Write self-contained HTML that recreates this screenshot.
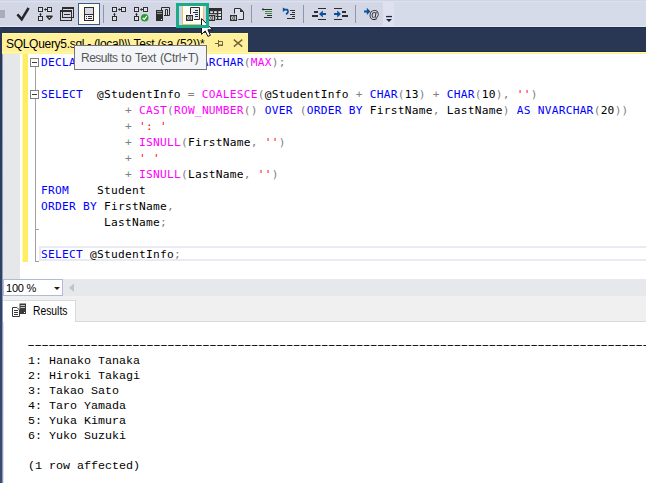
<!DOCTYPE html>
<html>
<head>
<meta charset="utf-8">
<title>SQLQuery5.sql</title>
<style>
html,body{margin:0;padding:0;}
body{width:646px;height:483px;overflow:hidden;position:relative;background:#fff;font-family:"Liberation Sans",sans-serif;}
.abs{position:absolute;}
#topstrip{left:0;top:0;width:646px;height:1px;background:#cfd5e6;border-bottom:1px solid #dde1ed;}
#toolbar{left:0;top:2px;width:646px;height:25px;background:#d6dbe9;}
#tbdark{left:0;top:3px;width:383px;height:22px;background:#d3d7e5;}
#tblight{left:383px;top:2px;width:11px;height:24px;background:#dfe2ee;}
#navy{left:0;top:27px;width:646px;height:23px;background:#293755;border-top:1px solid #1e2c4c;border-bottom:1px solid #1c2b50;}
#tbhl{left:0;top:26px;width:646px;height:1px;background:#e5e9f5;}
#leftedge{left:0;top:27px;width:2px;height:456px;background:linear-gradient(to bottom,#283756 0px,#2a3a59 75px,#35496b 375px,#394d70 456px);}
#leftedge3{left:2px;top:54px;width:1px;height:429px;background:#8e9bc0;}
#tab{left:2px;top:33px;width:246px;height:20px;background:#fff09b;border-top:1px solid #fffa9c;}
#tabline{left:2px;top:52px;width:644px;height:1px;background:#fffb99;border-bottom:1px solid #fff09b;}
#tabtext{left:6px;top:36px;font-size:12px;line-height:16px;color:#000;white-space:pre;letter-spacing:-0.3px;}
#editor{left:3px;top:54px;width:643px;height:225px;background:#fff;}
#margin{left:3px;top:54px;width:17px;height:225px;background:#e6e7e8;}
#chg{left:23px;top:54px;width:5px;height:208px;background:#ffee62;border-left:1px solid #fff6b8;margin-left:-1px;}
.ob{position:absolute;left:30px;width:7px;height:7px;border:1px solid #808080;background:#fff;}
.ob i{position:absolute;left:1px;top:3px;width:5px;height:1px;background:#3c3c3c;}
.vl{position:absolute;left:35px;width:1px;background:#a0a0a0;}
.tick{position:absolute;left:35px;width:4px;height:1px;background:#a0a0a0;}
#curline{left:39px;top:246px;width:620px;height:11px;border:2px solid #eaeaf3;}
#code{left:41px;top:55px;font-family:"DejaVu Sans Mono","Liberation Mono",monospace;font-size:11.2px;letter-spacing:0.257px;line-height:16px;color:#000;}
#code div{height:16px;white-space:pre;}
.k{color:#0000ff}.f{color:#ff00ff}.s{color:#ff0000}.g{color:#808080}
#zoombar{left:3px;top:279px;width:643px;height:17px;background:#e7e8ec;}
#zoomcombo{left:3px;top:279px;width:58px;height:15px;border:1px solid #b0bbd9;background:#fff;}
#zoomtxt{left:6px;top:281px;font-size:11px;line-height:14px;color:#000;white-space:pre;letter-spacing:-0.2px;}
#tabstrip{left:3px;top:296px;width:643px;height:25px;background:#f0f0f0;}
#tabstripline{left:3px;top:321px;width:643px;height:1px;background:#d9d9d9;}
#restab{left:3px;top:300px;width:72px;height:22px;background:#fff;border-top:1px solid #dadada;border-right:1px solid #dadada;}
#restxt{left:33px;top:304px;font-size:12px;line-height:14px;color:#000;transform:scaleX(0.86);transform-origin:0 0;}
#results{left:3px;top:322px;width:642px;height:161px;background:#fff;border-left:1px solid #e0e0e0;}
#out{left:28px;top:339px;font-family:"Liberation Mono",monospace;font-size:11.67px;line-height:15px;color:#000;}
#out div{height:15px;white-space:pre;}
#out div.dash{letter-spacing:-3.002px;position:relative;top:-1px;left:-3px;transform:scaleX(1.75);transform-origin:0 0;width:400px;overflow:hidden;}
#tooltip{left:74px;top:45px;width:131px;height:23px;border:1px solid #767676;background:#f4f5f9;}
#tooltip span{position:absolute;left:6px;top:4px;letter-spacing:-0.15px;font-size:12px;line-height:16px;color:#575757;white-space:pre;}
</style>
</head>
<body>
<div class="abs" id="topstrip"></div>
<div class="abs" id="toolbar"></div>
<div class="abs" id="tbdark"></div>
<div class="abs" id="tblight"></div>
<div class="abs" id="tbhl"></div>
<div class="abs" id="navy"></div>
<svg class="abs" id="tbicons" style="left:0;top:0" width="646" height="28" viewBox="0 0 646 28"><rect x="0" y="10" width="5" height="8" fill="#a9adba"/><path d="M17.4 14.4L21.7 19.4L28.6 8" fill="none" stroke="#262626" stroke-width="2.5"/><g transform="translate(38,0)"><rect x="0.5" y="7.5" width="4" height="4" fill="#eceef5" stroke="#2d2d2d"/><path d="M2.5 8v3M1 9.5h3" stroke="#c9ccd8" stroke-width="0.6"/><rect x="9.5" y="7.5" width="4" height="4" fill="#eceef5" stroke="#2d2d2d"/><path d="M11.5 8v3M10 9.5h3" stroke="#c9ccd8" stroke-width="0.6"/><rect x="0.5" y="16.5" width="4" height="4" fill="#eceef5" stroke="#2d2d2d"/><path d="M2.5 17v3M1 18.5h3" stroke="#c9ccd8" stroke-width="0.6"/><path d="M7 9.5H9" stroke="#2d2d2d"/><path d="M5.9 9.5l2-1.4v2.8z" fill="#2d2d2d"/><path d="M2.5 14V16" stroke="#2d2d2d"/><path d="M2.5 12.7l-1.4 2h2.8z" fill="#2d2d2d"/><path d="M8.7 16.3h5.4l-2.7 3z" fill="#e4e6ef" stroke="#2d2d2d" stroke-width="1.4" stroke-linejoin="round"/></g><rect x="62.5" y="7.5" width="11" height="10" fill="none" stroke="#2d2d2d"/><rect x="62" y="7" width="12" height="2" fill="#2d2d2d"/><rect x="60.5" y="10.5" width="11" height="10" fill="none" stroke="#2d2d2d"/><rect x="60" y="10" width="12" height="2" fill="#2d2d2d"/><rect x="64" y="14" width="6" height="1" fill="#2d2d2d"/><rect x="78.5" y="3.5" width="21" height="21" fill="#fffcf4" stroke="#3b5a8c"/><rect x="84.5" y="7.5" width="9" height="13" fill="#d9dbe6" stroke="#2d2d2d"/><rect x="85" y="15" width="8" height="5" fill="#f4f4f6"/><rect x="84" y="14" width="10" height="1" fill="#2d2d2d"/><rect x="86" y="16" width="1" height="1" fill="#2d2d2d"/><rect x="88" y="16" width="4" height="1" fill="#2d2d2d"/><rect x="86" y="18" width="1" height="1" fill="#2d2d2d"/><rect x="88" y="18" width="4" height="1" fill="#2d2d2d"/><rect x="103" y="5" width="1" height="18" fill="#8e96ab"/><rect x="251" y="5" width="1" height="18" fill="#8e96ab"/><rect x="303" y="5" width="1" height="18" fill="#8e96ab"/><rect x="355" y="5" width="1" height="18" fill="#8e96ab"/><g transform="translate(112,0)"><rect x="0.5" y="7.5" width="4" height="4" fill="#eceef5" stroke="#2d2d2d"/><path d="M2.5 8v3M1 9.5h3" stroke="#c9ccd8" stroke-width="0.6"/><rect x="9.5" y="7.5" width="4" height="4" fill="#eceef5" stroke="#2d2d2d"/><path d="M11.5 8v3M10 9.5h3" stroke="#c9ccd8" stroke-width="0.6"/><rect x="0.5" y="16.5" width="4" height="4" fill="#eceef5" stroke="#2d2d2d"/><path d="M2.5 17v3M1 18.5h3" stroke="#c9ccd8" stroke-width="0.6"/><path d="M7 9.5H9" stroke="#2d2d2d"/><path d="M5.9 9.5l2-1.4v2.8z" fill="#2d2d2d"/><path d="M2.5 14V16" stroke="#2d2d2d"/><path d="M2.5 12.7l-1.4 2h2.8z" fill="#2d2d2d"/></g><g transform="translate(134,0)"><rect x="0.5" y="7.5" width="4" height="4" fill="#eceef5" stroke="#2d2d2d"/><path d="M2.5 8v3M1 9.5h3" stroke="#c9ccd8" stroke-width="0.6"/><rect x="9.5" y="7.5" width="4" height="4" fill="#eceef5" stroke="#2d2d2d"/><path d="M11.5 8v3M10 9.5h3" stroke="#c9ccd8" stroke-width="0.6"/><rect x="0.5" y="16.5" width="4" height="4" fill="#eceef5" stroke="#2d2d2d"/><path d="M2.5 17v3M1 18.5h3" stroke="#c9ccd8" stroke-width="0.6"/><path d="M7 9.5H9" stroke="#2d2d2d"/><path d="M5.9 9.5l2-1.4v2.8z" fill="#2d2d2d"/><path d="M2.5 14V16" stroke="#2d2d2d"/><path d="M2.5 12.7l-1.4 2h2.8z" fill="#2d2d2d"/><circle cx="10.7" cy="17.7" r="3.8" fill="#2e9b2e"/><path d="M8.7 17.8l1.5 1.6l2.6-3.3" fill="none" stroke="#fff" stroke-width="1.2"/></g><rect x="156" y="10" width="7" height="11" fill="#2d2d2d"/><rect x="157" y="11" width="5" height="1" fill="#9a9a9a"/><rect x="157" y="13" width="5" height="1" fill="#9a9a9a"/><rect x="161" y="19" width="1" height="1" fill="#fff"/><path d="M161.5 10V7.5H169.5V15.5H164" fill="none" stroke="#2d2d2d"/><path d="M165.5 15V9.5H167.5V15" fill="none" stroke="#2d2d2d"/><rect x="182.5" y="3.5" width="21" height="21" fill="#fffdf6" stroke="#e8c468"/><path d="M190.5 14V7.5H199.5V19.5H194" fill="#eceef5" stroke="#2d2d2d"/><rect x="195" y="10" width="3" height="1" fill="#2d2d2d"/><rect x="193" y="12" width="5" height="1" fill="#2d2d2d"/><rect x="195" y="14" width="3" height="1" fill="#2d2d2d"/><rect x="195" y="16" width="3" height="1" fill="#2d2d2d"/><rect x="186" y="15" width="7" height="6" fill="#2d2d2d"/><rect x="187" y="16" width="5" height="4" fill="#5c5c5c"/><ellipse cx="188.4" cy="18" rx="0.95" ry="1.55" fill="none" stroke="#e4e4e4" stroke-width="0.75"/><rect x="190.9" y="16.2" width="0.9" height="3.6" fill="#e4e4e4"/><rect x="209" y="8" width="13" height="12" fill="#2d2d2d"/><rect x="210.2" y="11.2" width="2.6" height="1.9" fill="#e3e5ee"/><rect x="214.1" y="11.2" width="2.7" height="1.9" fill="#e3e5ee"/><rect x="218.3" y="11.2" width="2.7" height="1.9" fill="#e3e5ee"/><rect x="218.3" y="14" width="2.7" height="2" fill="#e3e5ee"/><rect x="218.3" y="17" width="2.7" height="1.9" fill="#e3e5ee"/><rect x="215.8" y="14.4" width="1.2" height="1.4" fill="#e3e5ee"/><rect x="215.8" y="17" width="1.2" height="1.9" fill="#e3e5ee"/><rect x="208" y="14.2" width="7.6" height="7" fill="#d3d7e5"/><rect x="208" y="15" width="7" height="6" fill="#2d2d2d"/><rect x="209" y="16" width="5" height="4" fill="#5c5c5c"/><ellipse cx="210.4" cy="18" rx="0.95" ry="1.55" fill="none" stroke="#e4e4e4" stroke-width="0.75"/><rect x="212.9" y="16.2" width="0.9" height="3.6" fill="#e4e4e4"/><path d="M234.5 13.5V8.5H240.3L243.5 11.7V19.5H238.3" fill="#dde0ec" stroke="#2d2d2d"/><path d="M240 8.5V12H243.5z" fill="#2d2d2d"/><rect x="230" y="15" width="7" height="6" fill="#2d2d2d"/><rect x="231" y="16" width="5" height="4" fill="#5c5c5c"/><ellipse cx="232.4" cy="18" rx="0.95" ry="1.55" fill="none" stroke="#e4e4e4" stroke-width="0.75"/><rect x="234.9" y="16.2" width="0.9" height="3.6" fill="#e4e4e4"/><rect x="262" y="9" width="10" height="1" fill="#2d2d2d"/><rect x="262" y="8.6" width="2" height="1.6" fill="#2d2d2d"/><rect x="265" y="11" width="7" height="1" fill="#3a8a3a"/><rect x="265" y="13" width="7" height="1" fill="#3a8a3a"/><rect x="267" y="15" width="5" height="1" fill="#2d2d2d"/><rect x="264" y="17" width="8" height="1" fill="#2d2d2d"/><path d="M284.2 9.6H287.2Q289.4 12 286 14.2" fill="none" stroke="#0b4fa0" stroke-width="1.7"/><path d="M282.8 7.4V12L286.2 9.4z" fill="#0b4fa0"/><rect x="290" y="10" width="5" height="1" fill="#2d2d2d"/><rect x="292" y="12" width="3" height="1" fill="#2d2d2d"/><rect x="290" y="14" width="5" height="1" fill="#2d2d2d"/><rect x="292" y="16" width="3" height="1" fill="#2d2d2d"/><rect x="287" y="18" width="8" height="1" fill="#2d2d2d"/><rect x="318" y="8" width="8" height="1" fill="#2d2d2d"/><rect x="318" y="19" width="8" height="1" fill="#2d2d2d"/><rect x="314" y="11" width="4" height="2" fill="#2d2d2d"/><rect x="312" y="15" width="6" height="2" fill="#2d2d2d"/><path d="M319 14L322.8 10.4V13H326V15H322.8V17.6z" fill="#0b4fa0"/><rect x="334" y="8" width="8" height="1" fill="#2d2d2d"/><rect x="334" y="19" width="8" height="1" fill="#2d2d2d"/><rect x="342" y="11" width="4" height="2" fill="#2d2d2d"/><rect x="342" y="15" width="6" height="2" fill="#2d2d2d"/><path d="M341 14L337.2 10.4V13H334V15H337.2V17.6z" fill="#0b4fa0"/><path d="M370.4 11.4L366.8 7.8V10.4H364V12.4H366.8V15z" fill="#0b4fa0"/><g style="will-change:opacity;opacity:0.99"><text x="374" y="17.9" font-family="Liberation Sans, sans-serif" font-size="10.5" font-weight="bold" text-anchor="middle" fill="#1e1e1e">@</text></g><rect x="386" y="15.9" width="6" height="1.3" fill="#1b2844"/><path d="M386 19H392L389 22z" fill="#1b2844"/></svg>
<div class="abs" id="leftedge"></div>
<div class="abs" id="leftedge3"></div>
<div class="abs" id="tab"></div>
<div class="abs" id="tabline"></div>
<div class="abs" id="tabtext">SQLQuery5.sql - (local)\\.Test (sa (52))*</div>
<svg class="abs" style="left:210px;top:33px" width="40" height="20" viewBox="210 33 40 20"><path d="M215 43.5H218.5M218.5 40V47M218.5 41.5H222.5V45.5H218.5" fill="none" stroke="#75633d" stroke-width="1"/><rect x="218" y="44.5" width="5" height="1.5" fill="#75633d"/><path d="M233.8 39.6L242.3 46.6M242.3 39.6L233.8 46.6" stroke="#75633d" stroke-width="1.4" fill="none"/></svg>
<div class="abs" id="editor"></div>
<div class="abs" id="margin"></div>
<div class="abs" id="chg"></div>
<div class="vl" style="top:67px;height:195px;"></div>
<div class="ob" style="top:58px;"><i></i></div>
<div class="ob" style="top:90px;"><i></i></div>
<div class="tick" style="top:229px;"></div>
<div class="tick" style="top:261px;"></div>
<div class="abs" id="curline"></div>
<div class="abs" id="code">
<div><span class="k">DECLARE</span> @StudentInfo <span class="k">NVARCHAR</span><span class="g">(</span><span class="f">MAX</span><span class="g">);</span></div>
<div> </div>
<div><span class="k">SELECT</span>  @StudentInfo <span class="g">=</span> <span class="f">COALESCE</span><span class="g">(</span>@StudentInfo <span class="g">+</span> <span class="k">CHAR</span><span class="g">(</span>13<span class="g">)</span> <span class="g">+</span> <span class="k">CHAR</span><span class="g">(</span>10<span class="g">),</span> <span class="s">''</span><span class="g">)</span></div>
<div>            <span class="g">+</span> <span class="f">CAST</span><span class="g">(</span><span class="f">ROW_NUMBER</span><span class="g">()</span> <span class="k">OVER</span> <span class="g">(</span><span class="k">ORDER</span> <span class="k">BY</span> FirstName<span class="g">,</span> LastName<span class="g">)</span> <span class="k">AS</span> <span class="k">NVARCHAR</span><span class="g">(</span>20<span class="g">))</span></div>
<div>            <span class="g">+</span> <span class="s">': '</span></div>
<div>            <span class="g">+</span> <span class="f">ISNULL</span><span class="g">(</span>FirstName<span class="g">,</span> <span class="s">''</span><span class="g">)</span></div>
<div>            <span class="g">+</span> <span class="s">' '</span></div>
<div>            <span class="g">+</span> <span class="f">ISNULL</span><span class="g">(</span>LastName<span class="g">,</span> <span class="s">''</span><span class="g">)</span></div>
<div><span class="k">FROM</span>    Student</div>
<div><span class="k">ORDER</span> <span class="k">BY</span> FirstName<span class="g">,</span></div>
<div>         LastName<span class="g">;</span></div>
<div> </div>
<div><span class="k">SELECT</span> @StudentInfo<span class="g">;</span></div>
</div>
<div class="abs" id="zoombar"></div>
<div class="abs" id="zoomcombo"></div>
<div class="abs" id="zoomtxt">100 %</div>
<div class="abs" id="tabstrip"></div>
<div class="abs" id="tabstripline"></div>
<div class="abs" id="restab"></div>
<div class="abs" id="restxt">Results</div>
<svg class="abs" style="left:3px;top:279px" width="100" height="43" viewBox="3 279 100 43">
<path d="M54 287H60L57 290Z" fill="#1e1e1e"/>
<path d="M74 283.5V292L69 287.75Z" fill="#c2c3c9"/>
<path d="M12.5 307.5H17L19.5 310V316.5H12.5Z" fill="#fff" stroke="#3a3a3a"/>
<rect x="14" y="310" width="4" height="1" fill="#3a3a3a"/><rect x="14" y="312" width="4" height="1" fill="#3a3a3a"/><rect x="14" y="314" width="4" height="1" fill="#3a3a3a"/>
<rect x="19.5" y="303.5" width="6.5" height="10.5" fill="#3a3a3a"/>
<rect x="20.5" y="305" width="4.5" height="1" fill="#c8c8c8"/><rect x="20.5" y="307" width="4.5" height="1" fill="#c8c8c8"/><rect x="24" y="312" width="1" height="1" fill="#fff"/>
</svg>
<div class="abs" id="results"></div>
<div class="abs" id="out">
<div class="dash">------------------------------------------------------------------------------------------------------</div>
<div>1: Hanako Tanaka</div>
<div>2: Hiroki Takagi</div>
<div>3: Takao Sato</div>
<div>4: Taro Yamada</div>
<div>5: Yuka Kimura</div>
<div>6: Yuko Suzuki</div>
<div> </div>
<div>(1 row affected)</div>
</div>
<div class="abs" id="tooltip"><span style="left:6px;letter-spacing:-0.5px">Results </span><span style="left:46.2px;letter-spacing:0.6px">to </span><span style="left:60px;letter-spacing:-0.25px">Text </span><span style="left:84.9px;letter-spacing:-0.29px">(Ctrl+T)</span></div>
<svg class="abs" id="cursor" style="left:198px;top:15px" width="24" height="26" viewBox="-3 -3 24 26"><path d="M0.5 0.6V16.4L4.2 12.9L6.9 18.4L9.4 17.3L6.9 11.8H11.6Z" fill="#fff" stroke="#10131c" stroke-width="1" stroke-linejoin="miter"/></svg><svg class="abs" id="greenbox" style="left:170px;top:0" width="50" height="30" viewBox="170 0 50 30"><rect x="177.5" y="4.5" width="30" height="22" fill="none" stroke="#1aab8a" stroke-width="3"/></svg>
</body>
</html>
